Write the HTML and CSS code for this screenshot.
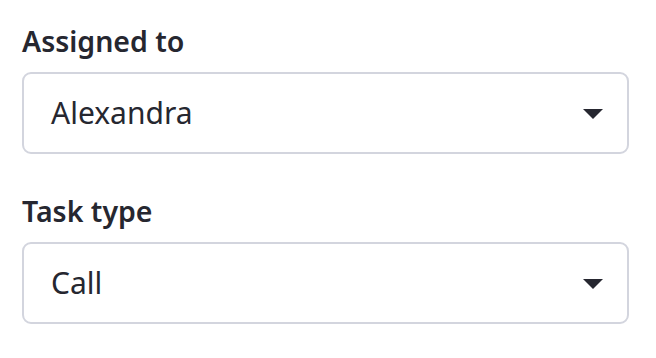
FILE: index.html
```html
<!DOCTYPE html>
<html lang="en">
<head>
  <meta charset="UTF-8">
  <title>Task form</title>
  <link rel="stylesheet" href="styles.css">
</head>
<body>

  <div class="form">
    <div class="field">
      <label class="field-label">Assigned to</label>
      <div class="select-box">
        <span class="select-value">Alexandra</span>
        <svg class="caret" width="20" height="10" viewBox="0 0 20 10"><path d="M0 0 L20 0 L10 10 Z" fill="#262730"/></svg>
      </div>
    </div>

    <div class="field">
      <label class="field-label">Task type</label>
      <div class="select-box">
        <span class="select-value">Call</span>
        <svg class="caret" width="20" height="10" viewBox="0 0 20 10"><path d="M0 0 L20 0 L10 10 Z" fill="#262730"/></svg>
      </div>
    </div>
  </div>

</body>
</html>
```

FILE: styles.css
```css
body {
  font-family: 'Noto Sans', 'Open Sans', sans-serif;
  margin: 0;
  padding: 0;
  background-color: white;
  color: #262730;
}

.form {
  display: flex;
  flex-direction: column;
  gap: 35px;
  padding: 19px 27px 0 22px;
}

.field {
  display: flex;
  flex-direction: column;
}

.field-label {
  font-size: 28.5px;
  font-weight: 600;
  line-height: 44px;
  margin-bottom: 9px;
}

.select-box {
  display: flex;
  justify-content: space-between;
  align-items: center;
  height: 78px;
  border: 2px solid #d3d5de;
  border-radius: 9px;
  padding: 0 24px 0 27px;
}

.select-value {
  font-size: 30px;
  line-height: 40px;
}

.caret {
  display: block;
  margin-top: 1px;
}
```
